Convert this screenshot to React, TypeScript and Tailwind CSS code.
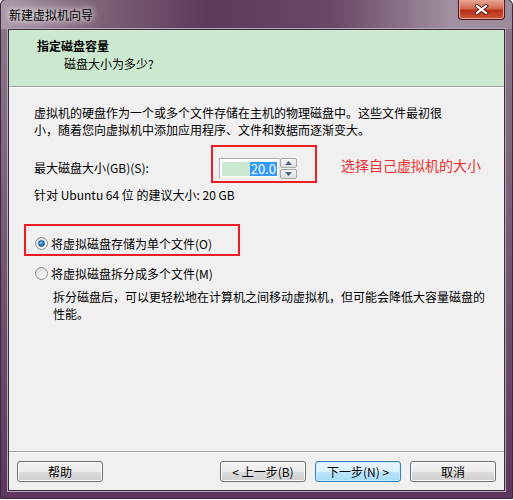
import React from 'react'

function WizButton ({ label, focused }: { label: string, focused?: boolean }): React.ReactElement {
  return (
    <button
      className={
        focused
          ? 'w-[86px] h-[21px] rounded-[3px] border border-[#3c7fb1] bg-[linear-gradient(#eaf6fd_0%,#d9f0fc_50%,#bee6fd_50%,#a7d9f5_100%)] shadow-[inset_0_0_0_1px_#c4ecfd] text-[12px] leading-none text-black flex items-center justify-center'
          : 'w-[86px] h-[21px] rounded-[3px] border border-[#707070] bg-[linear-gradient(#f2f2f2_0%,#ebebeb_50%,#dddddd_50%,#cfcfcf_100%)] shadow-[inset_0_0_0_1px_#fcfcfc] text-[12px] leading-none text-black flex items-center justify-center'
      }
    >
      {label}
    </button>
  )
}

function Radio ({ checked }: { checked?: boolean }): React.ReactElement {
  return (
    <span className="w-[13px] h-[13px] rounded-full border border-[#8e8f8f] bg-[linear-gradient(135deg,#d6d6d6,#fefefe)] flex items-center justify-center shrink-0">
      {checked && (
        <span className="w-[7px] h-[7px] rounded-full bg-[radial-gradient(circle_at_40%_35%,#8fd0f5_0%,#2a82c8_45%,#0e4a7e_100%)] border border-[#1f5a8a]" />
      )}
    </span>
  )
}

function Arrow ({ up }: { up?: boolean }): React.ReactElement {
  return (
    <span className="w-[17px] h-[10px] rounded-[2px] border border-[#a8a8a8] bg-[linear-gradient(#f6f6f6,#dedede)] flex items-center justify-center">
      <svg width="7" height="4" viewBox="0 0 7 4">
        {up ? <polygon points="0,4 3.5,0 7,4" fill="#4d6185" /> : <polygon points="0,0 7,0 3.5,4" fill="#4d6185" />}
      </svg>
    </span>
  )
}

export default function App (): React.ReactElement {
  return (
    <div className="w-[513px] h-[500px] flex flex-col px-[7px] pb-[7px] bg-[linear-gradient(#8c7a8c_0%,#7a6078_40%,#5e3660_100%)] font-['Microsoft_YaHei','Noto_Sans_CJK_SC',sans-serif] text-black rounded-t-[6px] border border-[#3a2a3a] -mt-[1px]">
      {/* 标题栏 */}
      <div className="h-[29px] -mx-[7px] px-[7px] flex justify-between bg-[linear-gradient(90deg,#a898a8_0%,#806478_18%,#5c3a5c_40%,#6a4866_65%,#a090a0_88%,#9a8a9a_100%)] rounded-t-[6px]">
        <span className="pt-[7px] pl-[1px] text-[12px] leading-[16px] [text-shadow:0_0_6px_#fff,0_0_10px_#fff]">新建虚拟机向导</span>
        <span className="w-[47px] h-[20px] rounded-b-[4px] border border-t-0 border-[#4a1a20] bg-[linear-gradient(#e6a898_0%,#d06850_45%,#b83018_55%,#d0583c_100%)] shadow-[inset_0_0_0_1px_#eea08c] flex items-center justify-center">
          <svg width="15" height="11" viewBox="0 0 15 11">
            <path d="M3 2 L12 9 M12 2 L3 9" stroke="#5a1a10" strokeWidth="4" strokeLinecap="square" />
            <path d="M3 2 L12 9 M12 2 L3 9" stroke="#ffffff" strokeWidth="2.2" strokeLinecap="square" />
          </svg>
        </span>
      </div>

      {/* 客户区 */}
      <div className="flex-1 flex flex-col bg-[#f0f0f0] border border-[#3a2a3a] shadow-[0_0_0_1px_#b8a8b8]">
        <div className="h-[57px] shrink-0 bg-[#cce8cf] border-b border-[#a0a0a0] shadow-[0_1px_0_#ffffff] pl-[28px] pt-[8px]">
          <div className="text-[12px] leading-[16px] font-bold">指定磁盘容量</div>
          <div className="text-[12px] leading-[16px] mt-[2px] pl-[27px]">磁盘大小为多少?</div>
        </div>

        <div className="flex-1 pl-[15px] pt-[17px] text-[12px] leading-[15px]">
          <p className="pl-[10px] leading-[17px]">
            虚拟机的硬盘作为一个或多个文件存储在主机的物理磁盘中。这些文件最初很
            <br />
            小，随着您向虚拟机中添加应用程序、文件和数据而逐渐变大。
          </p>

          <div className="flex items-start mt-[7px] pl-[10px]">
            <span className="w-[177px] mt-[15px]">最大磁盘大小(GB)(S):</span>
            <div className="w-[106px] h-[38px] border-2 border-[#ee1c24] pl-[6px] pt-[11px] flex items-start">
              <div className="w-[61px] h-[21px] border border-[#abadb3] border-r-[#dbdfe6] border-b-[#e3e9ef] bg-white flex items-center px-[2px]">
                <span className="flex-1 h-[14px] bg-[#cce8cf]" />
                <span className="h-[14px] bg-[#3399ff] text-white text-[13px] leading-[14px] px-[1px]">20.0</span>
              </div>
              <div className="flex flex-col gap-[1px]">
                <Arrow up />
                <Arrow />
              </div>
            </div>
            <span className="ml-[24px] mt-[11px] text-[14px] leading-[18px] text-[#f03030]">选择自己虚拟机的大小</span>
          </div>

          <p className="pl-[10px] mt-[4px]">针对 Ubuntu 64 位 的建议大小: 20 GB</p>

          <div className="w-[216px] h-[32px] mt-[22px] border-2 border-[#ee1c24] pl-[9px] pt-[10px] flex items-start">
            <div className="flex items-center gap-[3px] h-[15px]">
              <Radio checked />
              <span>将虚拟磁盘存储为单个文件(O)</span>
            </div>
          </div>

          <div className="flex items-center gap-[3px] h-[15px] mt-[10px] pl-[11px]">
            <Radio />
            <span>将虚拟磁盘拆分成多个文件(M)</span>
          </div>

          <p className="pl-[29px] mt-[7px] leading-[17px]">
            拆分磁盘后，可以更轻松地在计算机之间移动虚拟机，但可能会降低大容量磁盘的
            <br />
            性能。
          </p>
        </div>

        <div className="border-t border-[#a0a0a0] shadow-[inset_0_1px_0_#ffffff] pt-[9px] pb-[8px] px-[8px] flex items-center">
          <WizButton label="帮助" />
          <div className="flex-1" />
          <div className="flex gap-[9px]">
            <WizButton label="< 上一步(B)" />
            <WizButton label="下一步(N) >" focused />
            <WizButton label="取消" />
          </div>
        </div>
      </div>
    </div>
  )
}
